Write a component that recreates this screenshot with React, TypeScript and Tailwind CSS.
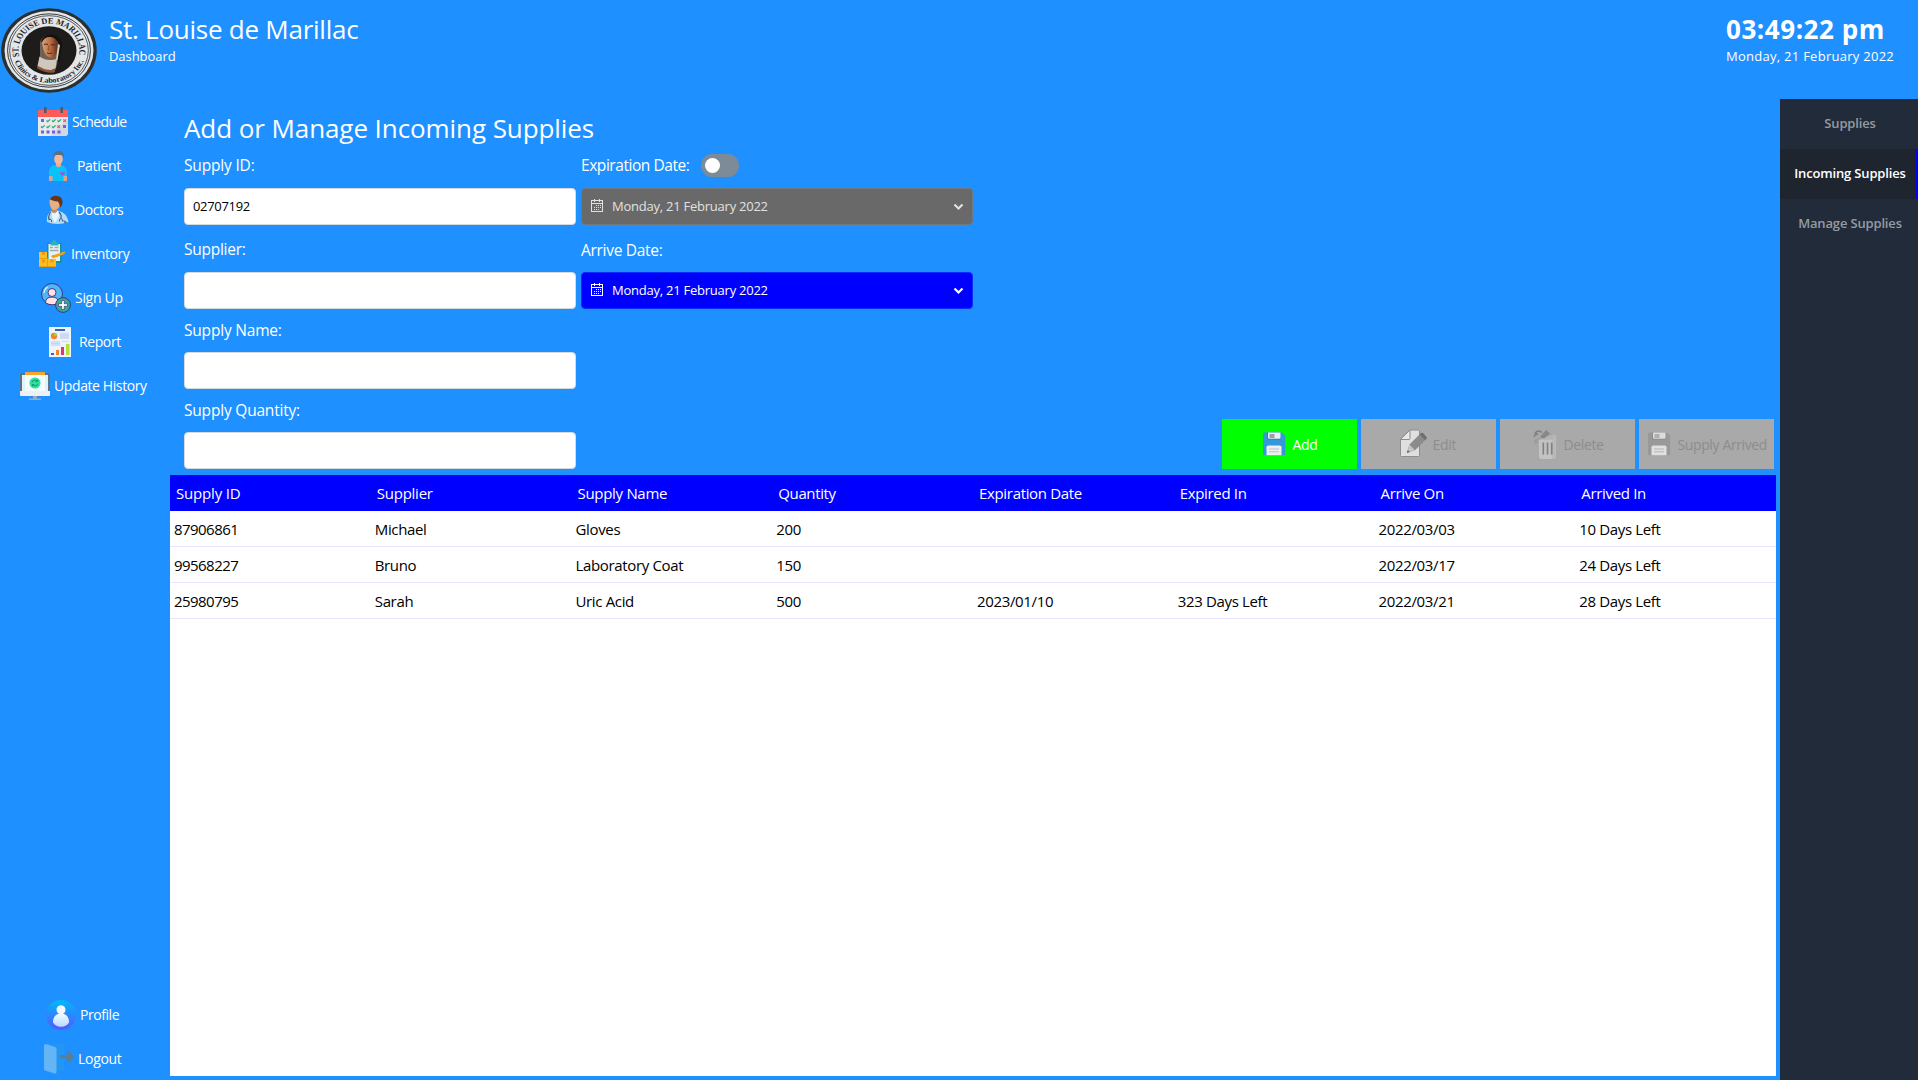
import React from 'react';
import type { ReactNode } from 'react';

function Logo() {
  return (
    <svg width="98" height="94" viewBox="0 0 98 94" className="shrink-0">
      <defs>
        <path id="arcTop" d="M -31 7 A 31.8 31.8 0 1 1 31 7" />
        <path id="arcBottom" d="M -36 13 A 38.3 38.3 0 0 0 36 13" />
        <linearGradient id="face" x1="0" x2="1">
          <stop offset="0" stopColor="#dca377" />
          <stop offset="0.55" stopColor="#b9683f" />
          <stop offset="1" stopColor="#5c2c1c" />
        </linearGradient>
      </defs>
      <g transform="translate(49 50.5) scale(0.955 0.845)">
        <circle r="50" fill="#2b2f2e" />
        <circle r="46.6" fill="#e3e7ea" />
        <circle r="43.4" fill="none" stroke="#222625" strokeWidth="1" />
        <circle r="41.2" fill="none" stroke="#222625" strokeWidth="0.8" />
        <circle r="28.8" fill="#1e1c1b" />
        <text fontFamily="Liberation Serif, serif" fontWeight="700" fontSize="9.8" fill="#1d2020">
          <textPath href="#arcTop" textLength="112" lengthAdjust="spacingAndGlyphs">ST. LOUISE DE MARILLAC</textPath>
        </text>
        <text fontFamily="Liberation Serif, serif" fontWeight="700" fontSize="8.6" fill="#1d2020">
          <textPath href="#arcBottom" textLength="94" lengthAdjust="spacingAndGlyphs">Clinics &amp; Laboratory Inc.</textPath>
        </text>
      </g>
      <path d="M40 43 Q42 35 51 35 Q60 36 60.500 46 L58.500 58 Q57 66 54.500 72 Q45 73 37 68 L40 57 Z" fill="#6e6257" />
      <path d="M41 42 Q43 34.500 51 34.500 Q61 35 62 45 L59.500 62 L57.500 62 Q60 44 57 41 Q50 37 41 42Z" fill="#15110f" />
      <path d="M42.200 42.500 Q44 36.500 51 37 Q58 38 57.800 47 Q57 57 50.500 57.500 Q43.500 56.500 42.200 42.500Z" fill="url(#face)" />
      <path d="M44 44.500q2-1 4 0M51 45q2-1 4 .3M47 53q2.500 1 5 0" stroke="#4a2418" strokeWidth="1" fill="none" />
      <path d="M49.300 45 L48 49.800 L50.500 50.200" stroke="#8a4526" strokeWidth="0.800" fill="none" />
      <path d="M58 44 L60 45 L57.500 60 L56 60 Z" fill="#d8d0c6" />
      <path d="M39.500 56.500 Q47 62 57 59 L55.500 68.500 L51 70 L45 69.500 L37.500 66Z" fill="#cfc6bc" />
      <path d="M37.500 66 L45 69.500 L51 70.500 L55.500 68 L54.500 72.500 Q45 73.500 37.500 68.500Z" fill="#8d5138" />
    </svg>
  );
}

function Svg30({ children, className = '' }: { children: ReactNode; className?: string }) {
  return (
    <svg width="30" height="30" viewBox="0 0 30 30" className={`shrink-0 ${className}`}>
      {children}
    </svg>
  );
}

const ScheduleIcon = () => (
  <Svg30>
    <path d="M0 10h30v17l-2 2H0z" fill="#e6e9ee" />
    <path d="M30 11L12 29h16l2-2z" fill="#d3d7df" />
    <path d="M0 10V4q0-1 1-1h28q1 0 1 1v6z" fill="#ff5b5b" />
    <path d="M6 0h2.600v6H6zM22.400 0H25v6h-2.600z" fill="#525a66" />
    <path d="M3 12h3v3H3zM25 18h3v3h-3zM3 23.500h3v3H3zM8.500 23.500h3v3h-3zM14 23.500h3v3h-3zM19.500 23.500h3v3h-3z" fill="#7460e0" />
    <path d="M8.500 13.500l1.200 1.200 2.400-2.400M14 13.500l1.200 1.200 2.400-2.400M19.500 13.500l1.200 1.200 2.400-2.400M3 19.500l1.200 1.200 2.400-2.400M8.500 19.500l1.200 1.200 2.400-2.400M14 19.500l1.200 1.200 2.400-2.400" fill="none" stroke="#2fa866" strokeWidth="1.200" />
    <path d="M25.300 12.300l2.600 2.600m0-2.600l-2.600 2.600M19.300 18.300l2.600 2.600m0-2.600l-2.600 2.600" stroke="#f0525a" strokeWidth="1.200" />
  </Svg30>
);

const PatientIcon = () => (
  <Svg30>
    <path d="M6 30V21q0-6 6-7h5q7 1 7 7v9z" fill="#08c3fb" />
    <path d="M6 25h3.500v5H6zM20.500 25H24v5h-3.500z" fill="#e0a184" />
    <path d="M13 11h5v4q-2.500 2.600-5 0z" fill="#e9a98a" />
    <ellipse cx="15.500" cy="8" rx="4.300" ry="5.600" fill="#f4b797" />
    <path d="M10.500 7Q9.500 0 15.500 0q6.500 0 5.300 7-1-3-2.600-3h-5.500q-1.500 1-2.200 3z" fill="#5e6f84" />
    <path d="M19.500 25l-2.300-2.300q-.9-1.700.8-2 1 0 1.500 1 .5-1 1.500-1 1.700.3.800 2z" fill="#b54bd4" />
  </Svg30>
);

const DoctorIcon = () => (
  <Svg30>
    <path d="M6 27Q5 20 10 16l4 .8 4-.8q8 2 9.500 11Q16 31 6 27z" fill="#b5dcf6" />
    <path d="M11 16l3 3 3-4 1 6-4 7-3-6z" fill="#e9f5ff" />
    <path d="M10.500 11h5.500v5q-2 3.500-5.500 1z" fill="#c9895e" />
    <path d="M8.500 7.500Q8 2.500 13 2q6 0 6 6.500Q18.500 15 13 15q-4-1-4.500-7.500z" fill="#e4b086" />
    <path d="M9 4.500Q10 .8 15 .8q6 .4 6.500 5.500.3 4-2.300 6.200-.5-4-2.200-6Q13 6.500 9 4.500z" fill="#68351c" />
    <path d="M9.500 17q-3 5-1 8M18 17q3 3 1.800 6.500" stroke="#39618a" strokeWidth="1.200" fill="none" />
    <path d="M7.500 25q1-2 3 0v2M18.600 26.500q-.5-3 1.400-3t1.500 3" stroke="#39618a" strokeWidth="1" fill="none" />
    <path d="M22 25q3 .5 4.500 2.500l-3 1z" fill="#477eb4" />
  </Svg30>
);

const InventoryIcon = () => (
  <Svg30>
    <g transform="translate(2 0)">
      <path d="M8 4h14.500v20H8z" fill="#15958f" />
      <path d="M9.500 5h11.500v17H9.500z" fill="#e9f0f3" />
      <path d="M11.500 3.500h2V2q1.500-2.200 3.500 0v1.500h2.500v3h-8z" fill="#2bb3b8" />
      <path d="M11 8.500h3m1.500 0h4M11 11.500h8.500M13 17h6" stroke="#9fa9b3" strokeWidth="1.300" />
      <path d="M0 13h8v7h9v8H0z" fill="#fcbd1d" />
      <path d="M0 19.500h8.500V28M0 27.500h17" stroke="#e8a010" strokeWidth="1" fill="none" />
      <path d="M3 13h3v3H3zM3 20.500h3v3H3zM11.500 20.500h3v3h-3z" fill="#ec9b0c" />
      <path d="M12 17l2 2.200 11-4q2-1.500.5-2.700z" fill="#f4a014" />
    </g>
  </Svg30>
);

const SignUpIcon = () => (
  <Svg30>
    <circle cx="11" cy="11" r="10.500" fill="#4db9f4" stroke="#443384" strokeWidth="1" />
    <path d="M3 10q.5-4 3.500-6" stroke="#dff3ff" strokeWidth="1.200" fill="none" />
    <path d="M4.500 20q0-6 6.500-6t6.500 6q-6 3.600-13 0z" fill="#fde1e4" stroke="#443384" strokeWidth="1" />
    <circle cx="11" cy="9.500" r="4" fill="#fde1e4" stroke="#443384" strokeWidth="1" />
    <circle cx="22" cy="22" r="7.400" fill="#35aa93" stroke="#443384" strokeWidth="1" />
    <path d="M20.700 17.500h2.600v3.200h3.200v2.600h-3.200v3.200h-2.600v-3.200h-3.200v-2.600h3.200z" fill="#fff" stroke="#443384" strokeWidth="0.700" />
  </Svg30>
);

const ReportIcon = () => (
  <Svg30>
    <path d="M4 0h22v30H4z" fill="#eef4fd" />
    <path d="M10 2h10v2H10z" fill="#3c62b5" />
    <circle cx="9" cy="9" r="3.200" fill="#f2842b" />
    <path d="M9 9V5.800A3.200 3.200 0 0 1 12.200 9z" fill="#a2cf45" />
    <path d="M15 5.500h9v6.500h-9zM6 14h9v5H6z" fill="#d2dff5" />
    <path d="M15 8h9M15 10.300h9M6 16.500h9M17 14.500h7" stroke="#bccdee" strokeWidth="0.600" />
    <path d="M6 26h3v2H6z" fill="#3c62b5" />
    <path d="M11 23h3v5h-3z" fill="#f2842b" />
    <path d="M16 20h3v8h-3z" fill="#e0356f" />
    <path d="M21 17h3.500v11H21z" fill="#b6e03c" />
  </Svg30>
);

const UpdateIcon = () => (
  <Svg30>
    <path d="M5 1h20v4H5z" fill="#f7a52a" />
    <path d="M0 3q0-1 1-1h4v2h20V2h4q1 0 1 1v21H0z" fill="#5e7482" />
    <path d="M2 4h26v16H2z" fill="#dff3fb" />
    <path d="M5 4h20v16H5z" fill="#f3fbff" />
    <path d="M0 20h30v4q0 1-1 1H1q-1 0-1-1z" fill="#eef1f4" />
    <path d="M13 25h4v2.500h4V29H9v-1.500h4z" fill="#9aabb8" />
    <circle cx="15" cy="12" r="5.600" fill="#33e09e" />
    <path d="M12 11.500q.5-2.500 3-2.500 1.500 0 2.500 1.500M18 12.500q-.5 2.500-3 2.500-1.500 0-2.500-1.500M17.700 8.500v2h-2M12.300 15.500v-2h2" stroke="#0d9c77" strokeWidth="1" fill="none" />
  </Svg30>
);

const ProfileIcon = () => (
  <Svg30>
    <defs>
      <linearGradient id="pf" x2="0" y2="1">
        <stop offset="0" stopColor="#00b9fa" />
        <stop offset="1" stopColor="#5558ff" />
      </linearGradient>
      <linearGradient id="pb" x2="0" y2="1">
        <stop offset="0" stopColor="#f3fbff" />
        <stop offset="1" stopColor="#b5dbff" />
      </linearGradient>
    </defs>
    <circle cx="15" cy="15" r="15" fill="url(#pf)" />
    <circle cx="15" cy="9.700" r="4.500" fill="#f0faff" />
    <path d="M7 22.500q0-7.500 6-8.800h4q6 1.300 6 8.800-3 4.300-8 4.300t-8-4.300z" fill="url(#pb)" />
  </Svg30>
);

const LogoutIcon = () => (
  <Svg30>
    <path d="M2 0h17q1 0 1 1v25q0 1-1 1H12z" fill="#2196f3" />
    <path d="M0 1.500Q0 0 2 0l9 3q1.500.5 1.500 2v23q0 2-2 1.600L1.200 26.500Q0 26 0 25z" fill="#64b5f6" />
    <path d="M17 11h6V7.500q1-1.500 2.500 0l4.500 5.200-4.500 5.300q-1.500 1.200-2.500 0V14.200h-6q-1.700-1.600 0-3.200z" fill="#607d8b" />
  </Svg30>
);

const Floppy = ({ gray }: { gray?: boolean }) => (
  <Svg30 className="-mt-px">
    <path d="M4 5q0-1.500 1.500-1.500h17.500l3.200 3.200v18q0 1.500-1.500 1.500h-19Q4 26.200 4 24.700z" fill={gray ? '#999999' : '#3498db'} />
    <path d="M8 3.500h13.500V9q0 1.500-1.500 1.500H9.500Q8 10.500 8 9z" fill={gray ? '#8a8a8a' : '#2980b9'} />
    <path d="M9 3.500h12.500v5q0 1.300-1.500 1.300h-9.500Q9 9.800 9 8.500z" fill={gray ? '#dcdcdc' : '#ecf0f1'} />
    <path d="M10.500 5h5v4h-5z" fill={gray ? '#b0b0b0' : '#95a5a6'} />
    <path d="M7.500 18.200Q7.500 16.500 9.300 16.500h11.500q1.700 0 1.700 1.700v8h-15z" fill={gray ? '#e0e0e0' : '#ecf0f1'} />
    <path d="M10 20h10M10 22.800h10" stroke={gray ? '#b5b5b5' : '#bdc3c7'} strokeWidth="1" />
  </Svg30>
);

const EditIcon = () => (
  <Svg30>
    <g transform="translate(-0.5 -0.5)">
      <path d="M11 1.500h9q1 0 1 1V27q0 1-1 1H3q-1 0-1-1V11z" fill="#dfdfdf" stroke="#8e8e8e" strokeWidth="1" />
      <path d="M11.500 1.500V10q0 1-1 1H2z" fill="#e8e8e8" stroke="#8e8e8e" strokeWidth="1" />
      <path d="M8.300 24.500l2.700-8.500L21 6l5.500 5.700-10 10z" fill="#8b8b8b" />
      <path d="M8.300 24.500l2.700-8.500 5.500 5.700z" fill="#c4c4c4" />
      <path d="M8.300 24.500l1-3 2 2z" fill="#666" />
      <path d="M21 6l1.500-1.400q1-.8 2 0l3.600 3.900q.7 1-.2 1.900l-1.400 1.300z" fill="#6f6f6f" />
    </g>
  </Svg30>
);

const TrashIcon = () => (
  <Svg30>
    <path d="M4 11L22 4.500V11l-17 4z" fill="#9c9c9c" />
    <path d="M8 11l14-5.500 4 1V29H12z" fill="#b3b3b3" />
    <path d="M5 4.500Q8 0 12 3.500M4 8q1-4 4-2.500" stroke="#7e7e7e" strokeWidth="1.600" fill="none" />
    <path d="M10 8l6-7 4 3.500-6 5z" fill="#878787" />
    <path d="M9 12q0-1.500 1.500-1.500H22q1.500-1 4-5V27q0 3-3 3H12q-3 0-3-3z" fill="#b9b9b9" />
    <path d="M9 11h13v19H12q-3 0-3-3z" fill="#c3c3c3" />
    <path d="M13.300 13.500v12M17.500 13.500v12M21.700 13.500v12" stroke="#828282" strokeWidth="1.700" />
  </Svg30>
);

type NavEntry = { label: string; icon: ReactNode; className: string };

const topNav: NavEntry[] = [
  { label: 'Schedule', icon: <ScheduleIcon />, className: 'pl-[38px] tracking-[-0.6px]' },
  { label: 'Patient', icon: <PatientIcon />, className: 'pl-[43px] tracking-[-0.31px]' },
  { label: 'Doctors', icon: <DoctorIcon />, className: 'pl-[41px] tracking-[-0.4px]' },
  { label: 'Inventory', icon: <InventoryIcon />, className: 'pl-[37px] tracking-[-0.4px]' },
  { label: 'Sign Up', icon: <SignUpIcon />, className: 'pl-[41px] tracking-[-0.3px]' },
  { label: 'Report', icon: <ReportIcon />, className: 'pl-[45px] tracking-[-0.4px]' },
  { label: 'Update History', icon: <UpdateIcon />, className: 'pl-[20px] tracking-[-0.4px]' },
];

const bottomNav: NavEntry[] = [
  { label: 'Profile', icon: <ProfileIcon />, className: 'pl-[46px] tracking-[-0.45px]' },
  { label: 'Logout', icon: <LogoutIcon />, className: 'pl-[44px] tracking-[-0.3px]' },
];

function NavItem({ label, icon, className }: NavEntry) {
  return (
    <button className={`flex h-11 w-full shrink-0 items-center gap-1 whitespace-nowrap text-sm ${className}`}>
      {icon}
      <span>{label}</span>
    </button>
  );
}

function Field({ label, value, className, gap }: { label: string; value?: string; className: string; gap: string }) {
  return (
    <div className={`flex flex-col ${gap}`}>
      <label className={`text-[15.5px] leading-[22px] ${className}`}>{label}</label>
      <input
        defaultValue={value}
        className="h-[37px] w-full rounded-[4px] border border-[#d5dadf] bg-white px-2 pb-px text-[13px] tracking-[-0.31px] text-black outline-none"
      />
    </div>
  );
}

function DatePicker({ className }: { className: string }) {
  return (
    <button className={`flex h-[37px] w-full items-center rounded-[4px] border pr-[8px] pl-[9px] text-[13px] ${className}`}>
      <svg width="12" height="13" viewBox="0 0 12 13" fill="none" stroke="currentColor" shapeRendering="crispEdges" className="-mt-[2px]">
        <path d="M0.500 1.500h11v11h-11zM0 4.500h12M3.500 0v3M8.500 0v3" />
        <path d="M5 6.500h1M7 6.500h1M9 6.500h1M3 8.500h1M5 8.500h1M7 8.500h1M9 8.500h1M3 10.500h1M5 10.500h1M7 10.500h1" />
      </svg>
      <span className="ml-[9px] pt-px tracking-[-0.24px]">Monday, 21 February 2022</span>
      <svg width="11" height="8" viewBox="0 0 11 8" fill="none" stroke="currentColor" strokeWidth="2.200" className="ml-auto">
        <path d="M1.500 1.500l4 4 4-4" />
      </svg>
    </button>
  );
}

const columns: { label: string; className: string }[] = [
  { label: 'Supply ID', className: 'tracking-[-0.18px]' },
  { label: 'Supplier', className: 'tracking-[-0.24px]' },
  { label: 'Supply Name', className: 'tracking-[-0.3px]' },
  { label: 'Quantity', className: 'tracking-[-0.36px]' },
  { label: 'Expiration Date', className: 'tracking-[-0.33px]' },
  { label: 'Expired In', className: 'tracking-[-0.34px]' },
  { label: 'Arrive On', className: 'tracking-[-0.32px]' },
  { label: 'Arrived In', className: 'tracking-[-0.32px]' },
];

const rows = [
  ['87906861', 'Michael', 'Gloves', '200', '', '', '2022/03/03', '10 Days Left'],
  ['99568227', 'Bruno', 'Laboratory Coat', '150', '', '', '2022/03/17', '24 Days Left'],
  ['25980795', 'Sarah', 'Uric Acid', '500', '2023/01/10', '323 Days Left', '2022/03/21', '28 Days Left'],
];

const disabled = 'bg-[#a9a9a9] text-[#8d8d8d]';
const actions: NavEntry[] = [
  { label: 'Add', icon: <Floppy />, className: 'bg-[#00ff00] text-white pl-[37px] tracking-[-0.3px]' },
  { label: 'Edit', icon: <EditIcon />, className: `${disabled} pl-[38px] tracking-[-0.3px]` },
  { label: 'Delete', icon: <TrashIcon />, className: `${disabled} pl-[30px] tracking-[-0.38px]` },
  { label: 'Supply Arrived', icon: <Floppy gray />, className: `${disabled} pl-[5px] tracking-[-0.38px]` },
];

export default function App() {
  return (
    <div className="flex h-[1080px] w-[1918px] flex-col overflow-hidden bg-[#1e90ff] font-['Open_Sans',sans-serif] text-white">
      <header className="flex h-[99px] shrink-0">
        <Logo />
        <div className="pt-3 pl-[11px]">
          <h1 className="text-[26px] leading-[34px] tracking-[-0.25px]">St. Louise de Marillac</h1>
          <p className="text-[13px] leading-5 tracking-[-0.06px]">Dashboard</p>
        </div>
        <div className="ml-auto w-[192px] pt-3 whitespace-nowrap">
          <p className="text-[26px] leading-[34px] font-bold tracking-[0.55px]">03:49:22 pm</p>
          <p className="text-[13px] leading-5 tracking-[0.27px]">Monday, 21 February 2022</p>
        </div>
      </header>

      <div className="flex min-h-0 flex-1">
        <nav className="flex w-[170px] shrink-0 flex-col pt-px">
          {topNav.map((n) => (
            <NavItem key={n.label} {...n} />
          ))}
          <div className="h-[585px] shrink-0" />
          {bottomNav.map((n) => (
            <NavItem key={n.label} {...n} />
          ))}
        </nav>

        <main className="flex w-[1610px] shrink-0 flex-col pt-3 pr-1 pb-1">
          <h2 className="mb-2 pl-[14px] text-[26px] leading-[35px] tracking-[-0.08px]">Add or Manage Incoming Supplies</h2>
          <div className="flex h-[315px] shrink-0 gap-[5px] pr-[2px] pl-[14px]">
            <div className="flex w-[392px] flex-col">
              <Field label="Supply ID:" value="02707192" gap="gap-3" className="tracking-[-0.18px]" />
              <div className="h-[13px]" />
              <Field label="Supplier:" gap="gap-3" className="tracking-[-0.26px]" />
              <div className="h-[10px]" />
              <Field label="Supply Name:" gap="gap-[11px]" className="tracking-[-0.2px]" />
              <div className="h-[10px]" />
              <Field label="Supply Quantity:" gap="gap-[11px]" className="tracking-[-0.2px]" />
            </div>
            <div className="flex w-[392px] flex-col">
              <div className="mb-[11px] flex h-[23px] items-start">
                <span className="w-[120px] text-[15.5px] leading-[22px] tracking-[-0.44px]">Expiration Date:</span>
                <span className="flex h-[23px] w-[38px] items-center rounded-full bg-[#7d8a97] pl-1">
                  <span className="size-[15px] rounded-full bg-white" />
                </span>
              </div>
              <DatePicker className="border-[#6f7880] bg-[#696969] text-[#e1e1e1]" />
              <span className="mt-[14px] mb-[11px] text-[15.5px] leading-[22px] tracking-[-0.3px]">Arrive Date:</span>
              <DatePicker className="border-[#0a2cff] bg-[#0000ff] text-white" />
            </div>
            <div className="ml-auto flex gap-1 self-end">
              {actions.map((a) => (
                <button key={a.label} className={`flex h-[50px] w-[135px] items-center gap-[3.5px] text-sm whitespace-nowrap ${a.className}`}>
                  {a.icon}
                  <span className="pt-px">{a.label}</span>
                </button>
              ))}
            </div>
          </div>

          <div className="mt-[6px] min-h-0 flex-1 bg-white text-[15px]">
            <div className="grid h-9 grid-cols-8 items-center bg-[#0000ff]">
              {columns.map((c) => (
                <span key={c.label} className={`pl-[6px] ${c.className}`}>
                  {c.label}
                </span>
              ))}
            </div>
            {rows.map((r) => (
              <div key={r[0]} className="grid h-9 grid-cols-8 items-center border-b border-[#e7e5ff] pt-px text-black">
                {r.map((cell, i) => (
                  <span key={i} className={`pl-1 ${i === 0 ? 'tracking-[-0.55px]' : 'tracking-[-0.35px]'}`}>
                    {cell}
                  </span>
                ))}
              </div>
            ))}
          </div>
        </main>

        <aside className="flex w-[138px] shrink-0 flex-col bg-[#222b3a] text-[13px] font-semibold tracking-[-0.16px] text-[#949ba3]">
          <button className="h-[50px] pl-[2px]">Supplies</button>
          <button className="h-[50px] border-r-2 border-[#0000ff] bg-[#1f252f] pl-1 whitespace-nowrap text-white">Incoming Supplies</button>
          <button className="h-[50px] pl-[2px]">Manage Supplies</button>
        </aside>
      </div>
    </div>
  );
}
